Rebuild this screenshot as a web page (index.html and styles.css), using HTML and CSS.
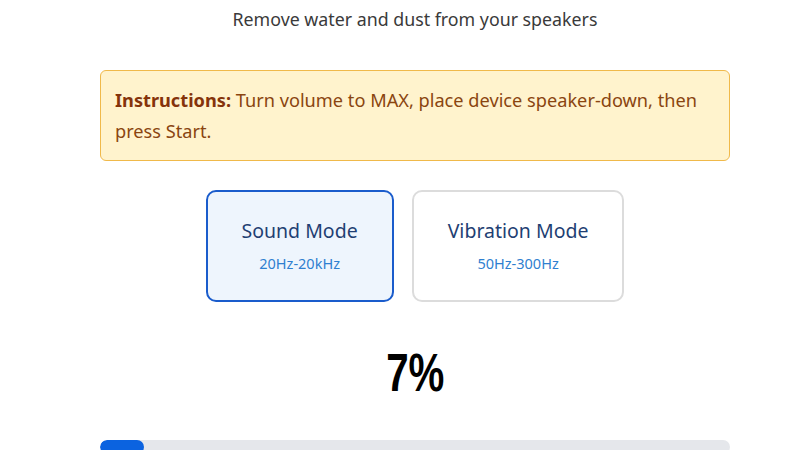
FILE: index.html
```html
<!DOCTYPE html>
<html lang="en">
<head>
  <meta charset="UTF-8">
  <meta name="viewport" content="width=device-width, initial-scale=1.0">
  <title>Speaker Cleaner</title>
  <link rel="stylesheet" href="styles.css">
</head>
<body>
  <div class="app">
    <p class="subtitle">Remove water and dust from your speakers</p>

    <div class="notice">
      <strong>Instructions:</strong> Turn volume to MAX, place device speaker-down, then press Start.
    </div>

    <div class="modes">
      <button class="mode active">
        <span class="mode-name">Sound Mode</span>
        <span class="mode-range">20Hz-20kHz</span>
      </button>
      <button class="mode">
        <span class="mode-name">Vibration Mode</span>
        <span class="mode-range">50Hz-300Hz</span>
      </button>
    </div>

    <div class="percent"><span>7%</span></div>

    <div class="progress">
      <div class="progress-fill" style="width: 7%"></div>
    </div>
  </div>
</body>
</html>
```

FILE: styles.css
```css
body {
  margin: 0;
  font-family: "Noto Sans", "Open Sans", sans-serif;
  background-color: #ffffff;
  color: #333;
}
.app {
  width: 630px;
  margin-left: 100px;
}
.subtitle {
  margin: 0;
  padding-top: 6px;
  text-align: center;
  font-size: 17.8px;
  line-height: 26px;
  color: #3a3a3a;
}
.notice {
  margin-top: 38px;
  padding: 14px 14px 13px;
  background-color: #fff3cd;
  border: 1px solid #f0b94a;
  border-radius: 6px;
  font-size: 18.2px;
  line-height: 31px;
  color: #8a4510;
}
.notice strong {
  color: #85330b;
}
.modes {
  display: flex;
  justify-content: center;
  gap: 18px;
  margin-top: 29px;
}
.mode {
  display: flex;
  flex-direction: column;
  align-items: center;
  justify-content: center;
  height: 112px;
  padding: 0 34px;
  background-color: #fff;
  border: 2px solid #dcdcdc;
  border-radius: 10px;
  font-family: inherit;
  cursor: pointer;
}
.mode.active {
  background-color: #eef5fd;
  border-color: #1a5ccc;
}
.mode-name {
  margin-top: -2px;
  font-size: 19.5px;
  color: #1f3f73;
}
.mode-range {
  margin-top: 9px;
  font-size: 14.5px;
  color: #2f7fd0;
}
.percent {
  margin-top: 41px;
  text-align: center;
  font-family: "Liberation Sans", Arial, sans-serif;
  font-weight: bold;
  font-size: 53px;
  line-height: 60px;
  color: #000;
}
.percent span {
  display: inline-block;
  transform: scaleX(0.76);
}
.progress {
  margin-top: 37px;
  height: 14px;
  background-color: #e5e7eb;
  border-radius: 7px;
  overflow: hidden;
}
.progress-fill {
  height: 100%;
  background-color: #0b63e0;
  border-radius: 7px;
}
```
